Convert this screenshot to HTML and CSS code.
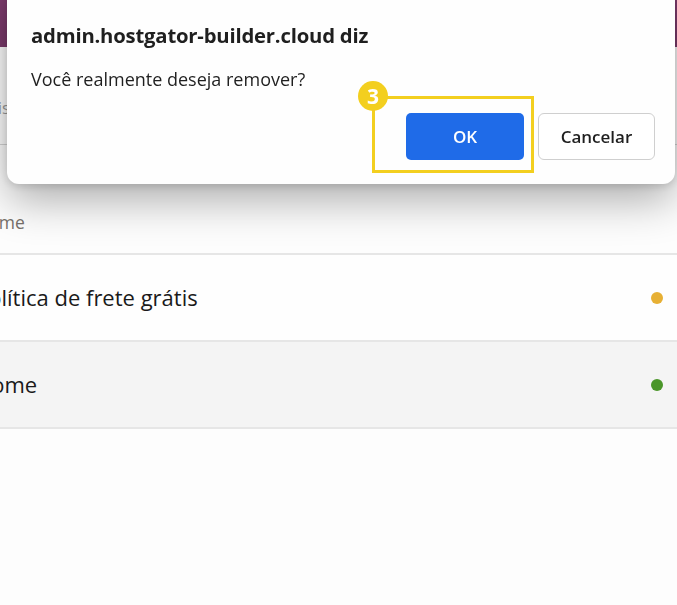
FILE: index.html
```html
<!DOCTYPE html>
<html lang="pt-BR">
<head>
<meta charset="utf-8">
<title>Remover</title>
<link rel="stylesheet" href="styles.css">
</head>
<body>
  <div class="page">
    <div class="topbar"></div>
    <div class="search-wrap">
      <div class="search">Pesquisar</div>
    </div>
    <div class="table">
      <div class="thead">Nome</div>
      <div class="row">
        <span class="name">Política de frete grátis</span>
        <span class="dot dot-yellow"></span>
      </div>
      <div class="row row-alt">
        <span class="name">Home</span>
        <span class="dot dot-green"></span>
      </div>
    </div>
  </div>

  <div class="dialog">
    <div class="title">admin.hostgator-builder.cloud diz</div>
    <div class="message">Você realmente deseja remover?</div>
    <div class="actions">
      <div class="highlight">
        <span class="badge">3</span>
        <button class="btn btn-ok">OK</button>
      </div>
      <button class="btn btn-cancel">Cancelar</button>
    </div>
  </div>
</body>
</html>
```
FILE: styles.css
```css
html, body {
  margin: 0;
  padding: 0;
  background: #fdfdfd;
  overflow: hidden;
}
body {
  width: 677px;
  height: 605px;
  font-family: "Open Sans", "Noto Sans", sans-serif;
}
.page {
  margin-left: -25px;
}
.topbar {
  height: 47px;
  background: #7b3a6b;
}
.search-wrap {
  height: 98px;
  border-bottom: 1px solid #d4d4d4;
  display: flex;
  align-items: flex-start;
  padding-top: 49px;
  box-sizing: border-box;
}
.search {
  color: #9a9a9a;
  font-size: 17px;
  margin-left: -26px;
}
.thead {
  height: 110px;
  box-sizing: border-box;
  padding-top: 65px;
  font-size: 17.5px;
  color: #77716b;
  border-bottom: 2px solid #e6e6e6;
  padding-left: 0;
}
.row {
  height: 87px;
  box-sizing: border-box;
  display: flex;
  align-items: center;
  justify-content: space-between;
  padding: 0 14px 0 0;
  border-bottom: 2px solid #e6e6e6;
  font-size: 22px;
  color: #1a1a1a;
  background: #fefefe;
}
.row-alt {
  background: #f4f4f4;
}
.name {
  padding-bottom: 2px;
}
.dot {
  width: 12px;
  height: 12px;
  border-radius: 50%;
}
.dot-yellow { background: #e7b034; }
.dot-green { background: #4a9629; }

.dialog {
  position: fixed;
  left: 7px;
  top: -12px;
  width: 668px;
  height: 196px;
  box-sizing: border-box;
  background: #fefefe;
  border-radius: 12px;
  box-shadow: 0 16px 44px rgba(0,0,0,0.32), 0 2px 8px rgba(0,0,0,0.14);
  padding: 33px 0 0 24px;
  font-family: "Open Sans", "Noto Sans", sans-serif;
  color: #1f1f1f;
}
.title {
  font-weight: 700;
  font-size: 20.3px;
  line-height: 28px;
  letter-spacing: -0.2px;
}
.message {
  font-size: 18px;
  line-height: 24px;
  margin-top: 18px;
}
.actions {
  display: flex;
  justify-content: flex-end;
  align-items: flex-start;
  gap: 4px;
  margin-top: 5px;
  margin-right: 20px;
}
.highlight {
  position: relative;
  width: 162px;
  height: 77px;
  box-sizing: border-box;
  border: 3px solid #f3cf1f;
  display: flex;
  justify-content: flex-end;
  padding: 14px 7px 0 0;
}
.badge {
  position: absolute;
  left: -17px;
  top: -18px;
  width: 30px;
  height: 30px;
  border-radius: 50%;
  background: #f3cf1f;
  color: #fff;
  font-weight: 700;
  font-size: 21px;
  line-height: 30px;
  text-align: center;
}
.btn {
  width: 118px;
  height: 47px;
  font-family: "Open Sans", "Noto Sans", sans-serif;
  font-size: 17px;
  font-weight: 600;
  border-radius: 5px;
  cursor: pointer;
}
.btn-ok {
  background: #1f6be8;
  color: #fff;
  border: none;
}
.btn-cancel {
  width: 117px;
  margin-top: 17px;
  background: #fff;
  color: #1f1f1f;
  border: 1.5px solid #cfcfcf;
  border-radius: 6px;
}
```
